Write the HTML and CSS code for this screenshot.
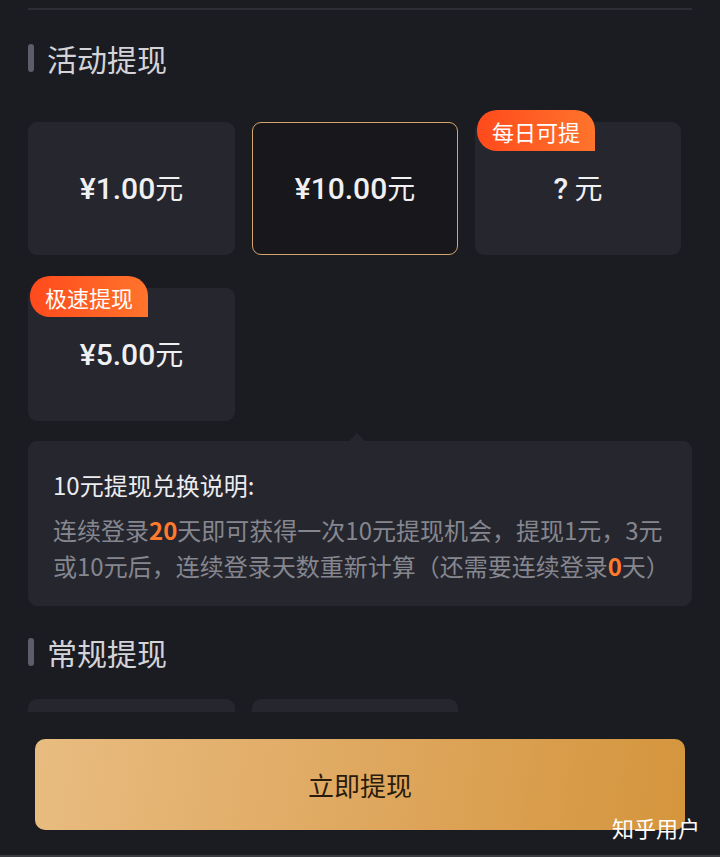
FILE: index.html
```html
<!DOCTYPE html>
<html lang="zh-CN">
<head>
<meta charset="utf-8">
<title>提现</title>
<link rel="stylesheet" href="styles.css">
</head>
<body>
<main class="page">
  <div class="divider"></div>

  <h2 class="section-title"><span class="bar"></span>活动提现</h2>

  <div class="cards">
    <div class="card"><span class="amt"><b>¥1.00</b>元</span></div>
    <div class="card selected"><span class="amt"><b>¥10.00</b>元</span></div>
    <div class="card"><span class="badge">每日可提</span><span class="amt"><b>?</b> 元</span></div>
    <div class="card"><span class="badge">极速提现</span><span class="amt"><b>¥5.00</b>元</span></div>
  </div>

  <div class="info">
    <span class="pointer"></span>
    <p class="info-title">10元提现兑换说明:</p>
    <p class="info-body">连续登录<em>20</em>天即可获得一次10元提现机会，提现1元，3元或10元后，连续登录天数重新计算（还需要连续登录<em>0</em>天）</p>
  </div>

  <h2 class="section-title second"><span class="bar"></span>常规提现</h2>

  <div class="cards cards-second">
    <div class="card"></div>
    <div class="card"></div>
  </div>
</main>

<footer class="footer">
  <button class="cta">立即提现</button>
  <span class="watermark">知乎用户</span>
</footer>
</body>
</html>
```

FILE: styles.css
```css
html, body {
  margin: 0;
  padding: 0;
  background: #1b1c22;
  font-family: "Noto Sans CJK SC", "Noto Sans", sans-serif;
  color: #e6e6ea;
}

.page {
  height: 712px;
  overflow: hidden;
  padding: 0 28px;
}

.divider {
  margin-top: 8px;
  height: 2px;
  background: #2d2e35;
}

.section-title {
  margin: 28px 0 0;
  height: 40px;
  display: flex;
  align-items: center;
  gap: 13px;
  font-size: 30px;
  font-weight: 400;
  color: #d3d3d8;
  line-height: 40px;
}

.section-title.second {
  margin-top: 26px;
}

.bar {
  width: 6px;
  height: 28px;
  border-radius: 3px;
  background: #5c5d6a;
}

.cards {
  margin-top: 44px;
  display: grid;
  grid-template-columns: 207px 206px 206px;
  column-gap: 17px;
  row-gap: 33px;
}

.cards-second {
  margin-top: 27px;
}

.card {
  position: relative;
  height: 133px;
  border-radius: 9px;
  background: #25262e;
  display: flex;
  align-items: center;
  justify-content: center;
  box-sizing: border-box;
}

.card.selected {
  background: #18181c;
  border: 1.5px solid #d2a66c;
}

.amt {
  font-size: 28px;
  color: #f0f0f3;
  line-height: 1;
}

.amt b {
  font-weight: 500;
  font-family: Roboto, "Noto Sans", "Noto Sans CJK SC", sans-serif;
  font-size: 30px;
}

.badge {
  position: absolute;
  top: -12px;
  left: 2px;
  height: 41px;
  padding: 0 15px;
  display: flex;
  align-items: center;
  font-size: 22px;
  color: #fff;
  border-radius: 20px 20px 0 20px;
  background: linear-gradient(90deg, #ff4a1c, #ff742c);
}

.info {
  position: relative;
  margin-top: 20px;
  width: 664px;
  box-sizing: border-box;
  background: #25262e;
  border-radius: 9px;
  padding: 26px 12px 22px 25px;
}

.pointer {
  position: absolute;
  top: -8px;
  left: 321px;
  width: 0;
  height: 0;
  border-left: 8px solid transparent;
  border-right: 8px solid transparent;
  border-bottom: 8px solid #25262e;
}

.info-title {
  margin: 0;
  font-size: 24px;
  line-height: 36px;
  color: #ececef;
}

.info-body {
  margin: 9px 0 0;
  font-size: 24px;
  line-height: 36px;
  color: #85868e;
}

.info-body em {
  font-style: normal;
  font-weight: 700;
  color: #ff7a2c;
}

.footer {
  position: fixed;
  left: 0;
  right: 0;
  bottom: 0;
  height: 145px;
  background: #1b1c22;
  border-bottom: 2px solid #3a3b41;
  box-sizing: border-box;
  padding: 27px 35px 0;
}

.cta {
  display: block;
  width: 650px;
  height: 91px;
  border: none;
  border-radius: 10px;
  background: linear-gradient(100deg, #e8bc80 0%, #dfa860 50%, #d4953c 100%);
  font-family: "Noto Sans CJK SC", sans-serif;
  font-size: 26px;
  color: #2a1c0c;
}

.watermark {
  position: absolute;
  right: 20px;
  bottom: 12px;
  font-size: 22px;
  color: #ffffff;
}
```
